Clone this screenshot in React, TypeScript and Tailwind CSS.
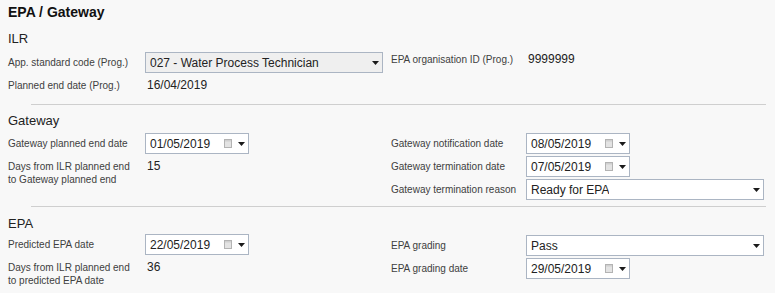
import React from 'react';

const Arrow = () => (
  <svg width="7" height="4" viewBox="0 0 7 4" className="shrink-0">
    <path d="M0 0h7L3.5 4z" fill="#1a1a1a" />
  </svg>
);

const CalIcon = () => (
  <svg width="8" height="9" viewBox="0 0 8 9" className="shrink-0">
    <rect x="0.5" y="0.5" width="7" height="8" fill="#e3e3e3" stroke="#b3b3b3" />
    <rect x="1" y="1" width="6" height="1.5" fill="#cfcfcf" />
  </svg>
);

const Select = ({ value, disabled = false }: { value: string; disabled?: boolean }) => (
  <div
    className={
      'flex h-[21px] w-[238px] items-center justify-between border border-[#abb5c3] pl-[4px] pr-[3px] text-[12px] text-[#222] ' +
      (disabled ? 'bg-[#efefef]' : 'bg-white')
    }
  >
    <span className="truncate">{value}</span>
    <Arrow />
  </div>
);

const DateBox = ({ value }: { value: string }) => (
  <div className="flex h-[21px] w-[104px] items-center justify-between border border-[#abb5c3] bg-white pl-[4px] pr-[3px] text-[12px] text-[#222]">
    <span>{value}</span>
    <span className="flex items-center gap-[6px]">
      <CalIcon />
      <Arrow />
    </span>
  </div>
);

const Label = ({ children, w }: { children: React.ReactNode; w: string }) => (
  <div className={'shrink-0 text-[10px] leading-[13px] text-[#404040] ' + w}>{children}</div>
);

const Row = ({ label, w, children }: { label: React.ReactNode; w: string; children: React.ReactNode }) => (
  <div className="flex items-center">
    <Label w={w}>{label}</Label>
    {children}
  </div>
);

const TextRow = ({ label, value, w }: { label: React.ReactNode; value: string; w: string }) => (
  <div className="flex items-start">
    <Label w={w}>{label}</Label>
    <div className="pl-[2px] text-[12px] leading-[13px] text-[#222]">{value}</div>
  </div>
);

const Divider = ({ mt }: { mt: string }) => <div className={'ml-[23px] h-px w-[735px] bg-[#cfcfcf] ' + mt} />;

const Heading = ({ children, mt }: { children: React.ReactNode; mt: string }) => (
  <h2 className={'text-[13px] leading-[15px] text-[#222] ' + mt}>{children}</h2>
);

const L = 'w-[137px]';
const R = 'w-[135px]';

export default function App() {
  return (
    <div className="h-[293px] w-[775px] overflow-hidden bg-[#f8f8f8] px-2 pt-[3px] font-['Liberation_Sans',Arial,sans-serif]">
      <h1 className="text-[14px] font-bold leading-[18px] text-[#111]">EPA / Gateway</h1>

      <Heading mt="mt-[10px]">ILR</Heading>
      <div className="mt-[6px] flex gap-2">
        <div className="flex w-[375px] flex-col gap-[6px]">
          <Row label="App. standard code (Prog.)" w={L}>
            <Select value="027 - Water Process Technician" disabled />
          </Row>
          <TextRow label="Planned end date (Prog.)" value="16/04/2019" w={L} />
        </div>
        <div className="flex w-[374px] flex-col pt-[1px]">
          <TextRow label="EPA organisation ID (Prog.)" value="9999999" w={R} />
        </div>
      </div>

      <Divider mt="mt-[12px]" />

      <Heading mt="mt-[8px]">Gateway</Heading>
      <div className="mt-[5px] flex gap-2">
        <div className="flex w-[375px] flex-col gap-[6px]">
          <Row label="Gateway planned end date" w={L}>
            <DateBox value="01/05/2019" />
          </Row>
          <TextRow
            label={
              <>
                Days from ILR planned end
                <br />
                to Gateway planned end
              </>
            }
            value="15"
            w={L}
          />
        </div>
        <div className="flex w-[374px] flex-col gap-[2px]">
          <Row label="Gateway notification date" w={R}>
            <DateBox value="08/05/2019" />
          </Row>
          <Row label="Gateway termination date" w={R}>
            <DateBox value="07/05/2019" />
          </Row>
          <Row label="Gateway termination reason" w={R}>
            <div className="w-[239px]">
              <Select value="Ready for EPA" />
            </div>
          </Row>
        </div>
      </div>

      <Divider mt="mt-[6px]" />

      <Heading mt="mt-[9px]">EPA</Heading>
      <div className="mt-[3px] flex gap-2">
        <div className="flex w-[375px] flex-col gap-[6px]">
          <Row label="Predicted EPA date" w={L}>
            <DateBox value="22/05/2019" />
          </Row>
          <TextRow
            label={
              <>
                Days from ILR planned end
                <br />
                to predicted EPA date
              </>
            }
            value="36"
            w={L}
          />
        </div>
        <div className="flex w-[374px] flex-col gap-[2px] pt-[1px]">
          <Row label="EPA grading" w={R}>
            <Select value="Pass" />
          </Row>
          <Row label="EPA grading date" w={R}>
            <DateBox value="29/05/2019" />
          </Row>
        </div>
      </div>
    </div>
  );
}
